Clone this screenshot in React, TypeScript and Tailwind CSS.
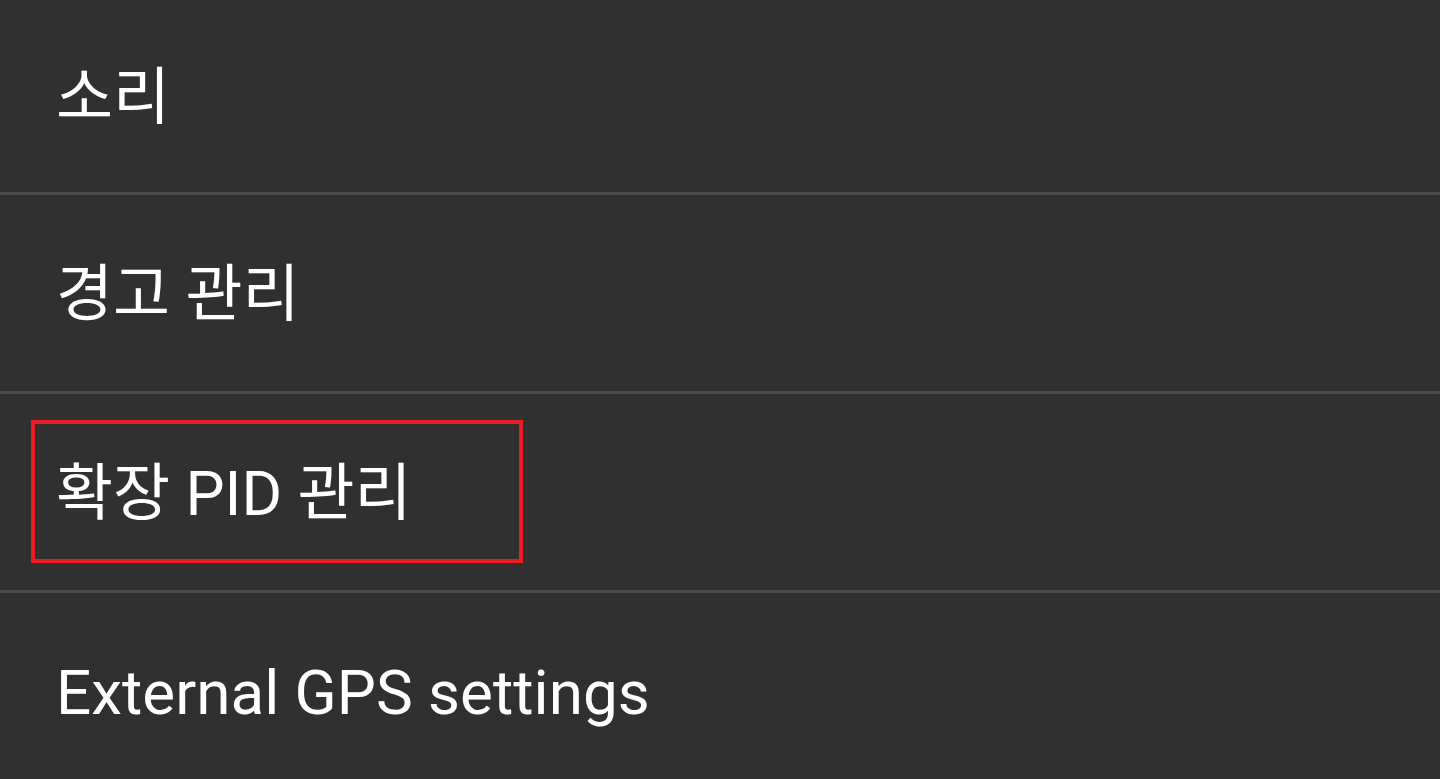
import React from "react";

const ROWS = [
    { label: "소리", h: "h-[192px]" },
    { label: "경고 관리", h: "h-[196px]" },
    { label: "확장 PID 관리", h: "h-[196px]", marked: true },
    { label: "External GPS settings", h: "h-[196px]" },
];

export default function App() {
    return (
        <div
            className="w-[1440px] h-[779px] overflow-hidden bg-[#303030] text-white"
            style={{ fontFamily: 'Roboto, "Noto Sans CJK KR", sans-serif' }}
        >
            {ROWS.map((row, i) => (
                <div key={row.label}>
                    {i > 0 && <div className="h-[3px] bg-[#4a4a4a]" />}
                    <div className={`relative flex items-center pl-[56px] pt-[4px] ${row.h}`}>
                        <span className="text-[62px] leading-none">{row.label}</span>
                        {/* highlight box */}
                        {row.marked && (
                            <div className="absolute left-[31px] top-[26px] w-[492px] h-[143px] border-[4px] border-[#ed1c24]" />
                        )}
                    </div>
                </div>
            ))}
        </div>
    );
}
